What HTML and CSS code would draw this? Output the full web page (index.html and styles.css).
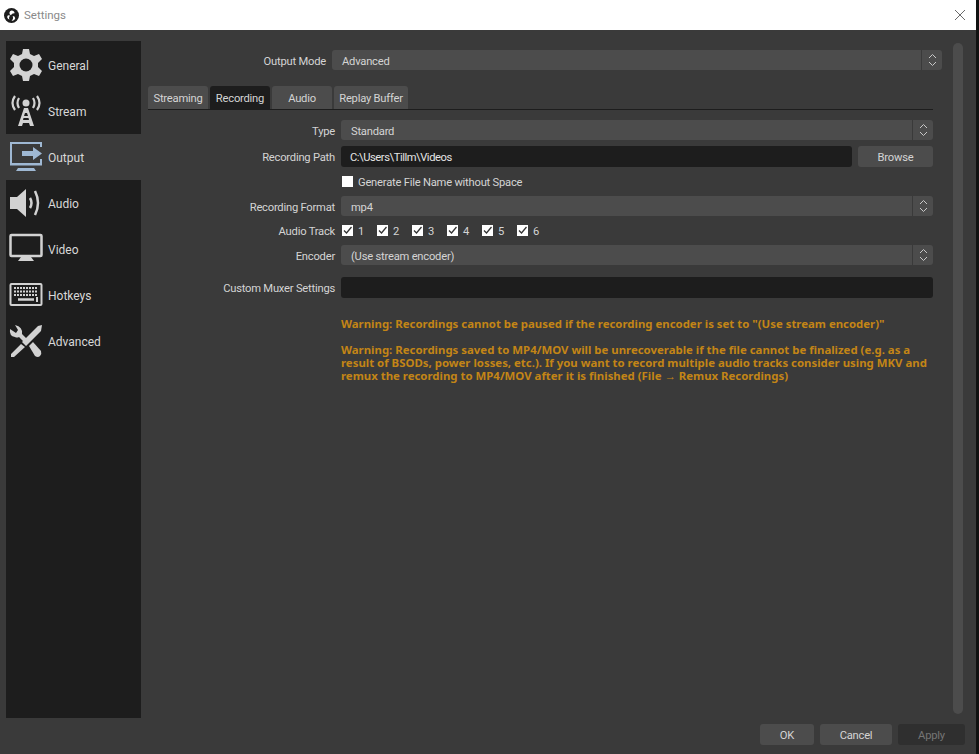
FILE: index.html
```html
<!DOCTYPE html>
<html lang="en">
<head>
  <meta charset="UTF-8">
  <title>Settings</title>
  <link rel="stylesheet" href="styles.css">
</head>
<body>
  <div class="titlebar">
    <svg class="app-logo" viewBox="0 0 24 24" width="15" height="15">
      <circle cx="12" cy="12" r="12" fill="#1d1d1d"/>
      <path d="M12 4a4 4 0 0 0-1 7.600 6 6 0 0 1 6-3.200A5 5 0 0 0 12 4zM6 12a4 4 0 0 0 3 6.500 6 6 0 0 1 .5-6.600A5 5 0 0 0 6 12zM12 20a5 5 0 0 0 6-3.500 4 4 0 0 0-4-3.500 6 6 0 0 1-2 7z" fill="#fff"/>
    </svg>
    <span class="title">Settings</span>
    <svg class="close" viewBox="0 0 12 12" width="12" height="12">
      <path d="M1 1l10 10M11 1L1 11" stroke="#6a6a6a" stroke-width="1" fill="none"/>
    </svg>
  </div>

  <div class="window">
    <div class="main">
      <ul class="sidebar">
        <li class="side-item">
          <svg viewBox="0 0 34 34" width="34" height="34">
            <path d="M14 1h6l1 5 4 2 5-2 3 5-4 4v4l4 4-3 5-5-2-4 2-1 5h-6l-1-5-4-2-5 2-3-5 4-4v-4L1 11l3-5 5 2 4-2z" fill="#d2d2d2"/>
            <circle cx="17" cy="17" r="6.500" fill="#1e1e1e"/>
          </svg>
          <span>General</span>
        </li>
        <li class="side-item">
          <svg viewBox="0 0 34 34" width="34" height="34">
            <circle cx="17" cy="9" r="3.500" fill="#d2d2d2"/>
            <path d="M10 4q-3 5 0 10M24 4q3 5 0 10M6 2q-5 7 0 14M28 2q5 7 0 14" stroke="#d2d2d2" stroke-width="2.200" fill="none"/>
            <path d="M15 14h4l6 18h-4l-1-3h-6l-1 3H9zM16 19l-1 3h4l-1-3zM14.500 24l-.5 2h6l-.5-2z" fill="#d2d2d2" fill-rule="evenodd"/>
          </svg>
          <span>Stream</span>
        </li>
        <li class="side-item active">
          <svg viewBox="0 0 34 34" width="34" height="34">
            <path d="M1 2h32v5h-2V4H3v19h28v-4h2v6.500H1z" fill="#9fb8d3"/>
            <path d="M9 28h16l2 3H7z" fill="#9fb8d3"/>
            <path d="M13 11h11V7l9 6.500-9 6.500v-4H13z" fill="#9fb8d3"/>
          </svg>
          <span>Output</span>
        </li>
        <li class="side-item">
          <svg viewBox="0 0 34 34" width="34" height="34">
            <path d="M1 11h7l9-8v28l-9-8H1z" fill="#d2d2d2"/>
            <path d="M21 12q3 5 0 10M26 5q6 12 0 24" stroke="#d2d2d2" stroke-width="2.500" fill="none"/>
          </svg>
          <span>Audio</span>
        </li>
        <li class="side-item">
          <svg viewBox="0 0 34 34" width="34" height="34">
            <rect x="1.500" y="3" width="31" height="21" rx="1" fill="none" stroke="#d2d2d2" stroke-width="2.500"/>
            <path d="M12 25h10l3 4H9z" fill="#d2d2d2"/>
          </svg>
          <span>Video</span>
        </li>
        <li class="side-item">
          <svg viewBox="0 0 34 34" width="34" height="34">
            <rect x="1.500" y="6" width="31" height="21" rx="1" fill="none" stroke="#d2d2d2" stroke-width="2"/>
            <path d="M5 10h24M5 13.500h24M5 17h24" stroke="#d2d2d2" stroke-width="2" stroke-dasharray="2 1" fill="none"/>
            <path d="M9 21.500h16" stroke="#d2d2d2" stroke-width="2.500" fill="none"/>
            <path d="M28 19v5" stroke="#d2d2d2" stroke-width="2" fill="none"/>
          </svg>
          <span>Hotkeys</span>
        </li>
        <li class="side-item">
          <svg viewBox="0 0 34 34" width="34" height="34">
            <path d="M1 5q-1 7 5 8 2 1 4 0l5 5 3-3-5-5q1-7-7-9l3 5-2 3z" fill="#d2d2d2"/>
            <path d="M33 1l-1 6-15 15-4-4L29 2zM16 23L5 33H2v-3l10-10z" fill="#d2d2d2"/>
            <path d="M20 22l4-4 8 9q1 3-1 5t-5 0z" fill="#d2d2d2"/>
          </svg>
          <span>Advanced</span>
        </li>
      </ul>

      <div class="content">
        <div class="mode-row">
          <label class="mode-label">Output Mode</label>
          <div class="select">
            <span class="select-text">Advanced</span>
            <span class="arrows"><svg viewBox="0 0 9 14" width="9" height="14"><path d="M1 5l3.500-3.500L8 5M1 9l3.500 3.500L8 9" stroke="#c8c8c8" fill="none"/></svg></span>
          </div>
        </div>

        <div class="tabs">
          <div class="tab">Streaming</div>
          <div class="tab selected">Recording</div>
          <div class="tab">Audio</div>
          <div class="tab wide">Replay Buffer</div>
        </div>

        <div class="form">
          <div class="row row-type">
            <label>Type</label>
            <div class="select">
              <span class="select-text">Standard</span>
              <span class="arrows"><svg viewBox="0 0 9 14" width="9" height="14"><path d="M1 5l3.500-3.500L8 5M1 9l3.500 3.500L8 9" stroke="#c8c8c8" fill="none"/></svg></span>
            </div>
          </div>
          <div class="row row-path">
            <label>Recording Path</label>
            <div class="input path">C:\Users\Tillm\Videos</div>
            <div class="btn browse">Browse</div>
          </div>
          <div class="row row-check">
            <label></label>
            <div class="check-item"><span class="box"></span>Generate File Name without Space</div>
          </div>
          <div class="row row-format">
            <label>Recording Format</label>
            <div class="select">
              <span class="select-text">mp4</span>
              <span class="arrows"><svg viewBox="0 0 9 14" width="9" height="14"><path d="M1 5l3.500-3.500L8 5M1 9l3.500 3.500L8 9" stroke="#c8c8c8" fill="none"/></svg></span>
            </div>
          </div>
          <div class="row row-tracks">
            <label>Audio Track</label>
            <div class="tracks">
              <div class="check-item"><span class="box"><svg viewBox="0 0 11 11" width="11" height="11"><path d="M2 5.500l2.500 2.500L9.500 2" stroke="#333" stroke-width="1.300" fill="none"/></svg></span>1</div>
              <div class="check-item"><span class="box"><svg viewBox="0 0 11 11" width="11" height="11"><path d="M2 5.500l2.500 2.500L9.500 2" stroke="#333" stroke-width="1.300" fill="none"/></svg></span>2</div>
              <div class="check-item"><span class="box"><svg viewBox="0 0 11 11" width="11" height="11"><path d="M2 5.500l2.500 2.500L9.500 2" stroke="#333" stroke-width="1.300" fill="none"/></svg></span>3</div>
              <div class="check-item"><span class="box"><svg viewBox="0 0 11 11" width="11" height="11"><path d="M2 5.500l2.500 2.500L9.500 2" stroke="#333" stroke-width="1.300" fill="none"/></svg></span>4</div>
              <div class="check-item"><span class="box"><svg viewBox="0 0 11 11" width="11" height="11"><path d="M2 5.500l2.500 2.500L9.500 2" stroke="#333" stroke-width="1.300" fill="none"/></svg></span>5</div>
              <div class="check-item"><span class="box"><svg viewBox="0 0 11 11" width="11" height="11"><path d="M2 5.500l2.500 2.500L9.500 2" stroke="#333" stroke-width="1.300" fill="none"/></svg></span>6</div>
            </div>
          </div>
          <div class="row row-encoder">
            <label>Encoder</label>
            <div class="select">
              <span class="select-text">(Use stream encoder)</span>
              <span class="arrows"><svg viewBox="0 0 9 14" width="9" height="14"><path d="M1 5l3.500-3.500L8 5M1 9l3.500 3.500L8 9" stroke="#c8c8c8" fill="none"/></svg></span>
            </div>
          </div>
          <div class="row row-muxer">
            <label>Custom Muxer Settings</label>
            <div class="input"></div>
          </div>
          <div class="warnings">
            <p>Warning: Recordings cannot be paused if the recording encoder is set to "(Use stream encoder)"</p>
            <p>Warning: Recordings saved to MP4/MOV will be unrecoverable if the file cannot be finalized (e.g. as a result of BSODs, power losses, etc.). If you want to record multiple audio tracks consider using MKV and remux the recording to MP4/MOV after it is finished (File → Remux Recordings)</p>
          </div>
        </div>
      </div>

      <div class="scrollbar"></div>
    </div>

    <div class="footer">
      <div class="btn ok">OK</div>
      <div class="btn cancel">Cancel</div>
      <div class="btn apply">Apply</div>
    </div>
  </div>
</body>
</html>
```

FILE: styles.css
```css
html {
  height: 100%;
  background-color: #111;
}
body {
  margin: 0;
  display: flex;
  flex-direction: column;
  width: 976px;
  height: 754px;
  font-family: Roboto, "Noto Sans", sans-serif;
  font-size: 11.2px;
  letter-spacing: -0.22px;
  color: #d4d4d4;
  background-color: #3a3a3a;
  overflow: hidden;
}

.titlebar {
  height: 30px;
  flex: none;
  display: flex;
  align-items: center;
  padding: 0 10px 0 4px;
  background-color: #fff;
}
.title {
  margin-left: 5px;
  color: #8a8a8a;
  font-size: 11.5px;
  letter-spacing: 0;
}
.close {
  margin-left: auto;
}

.window {
  flex: 1;
  display: flex;
  flex-direction: column;
  padding: 11px 0 9px 6px;
  min-height: 0;
}
.main {
  flex: 1;
  display: flex;
  min-height: 0;
}

.sidebar {
  width: 135px;
  height: 676px;
  flex: none;
  margin: 0;
  padding: 1px 0 0;
  list-style: none;
  background-color: #1d1d1d;
}
.side-item {
  height: 46px;
  display: flex;
  align-items: center;
  gap: 5px;
  padding-left: 3px;
  font-size: 12px;
  letter-spacing: 0;
  color: #d8d8d8;
}
.side-item span {
  padding-top: 2px;
}
.side-item.active {
  background-color: #3a3a3a;
}

.content {
  width: 785px;
  flex: none;
  margin-left: 7px;
  padding-top: 9px;
}

.mode-row {
  display: flex;
  align-items: center;
  height: 20px;
  width: 794px;
}
.mode-label {
  width: 178px;
  padding: 2px 6px 0 0;
  text-align: right;
}
.mode-row .select {
  width: 610px;
}

.select {
  display: flex;
  align-items: center;
  height: 20px;
  flex: 1;
  border-radius: 3px;
  background-color: #4c4c4c;
}
.select-text {
  flex: 1;
  padding: 2px 0 0 10px;
}
.arrows {
  width: 20px;
  height: 20px;
  display: flex;
  align-items: center;
  justify-content: center;
  border-left: 1px solid #3a3a3a;
}

.tabs {
  display: flex;
  gap: 2px;
  height: 24px;
  margin-top: 16px;
  border-bottom: 1px solid #1d1d1d;
  box-sizing: border-box;
}
.tab {
  width: 60px;
  height: 23px;
  box-sizing: border-box;
  padding-top: 2px;
  display: flex;
  align-items: center;
  justify-content: center;
  border-radius: 3px 3px 0 0;
  background-color: #4c4c4c;
}
.tab.selected {
  background-color: #1d1d1d;
}
.tab.wide {
  width: 74px;
}

.form {
  padding-top: 10px;
}
.row {
  display: flex;
  align-items: center;
  gap: 6px;
}
.row label {
  width: 187px;
  flex: none;
  padding-top: 2px;
  text-align: right;
}
.row-type {
  height: 20px;
}
.row-path {
  height: 21px;
  margin-top: 6px;
}
.row-check {
  height: 11px;
  margin-top: 9px;
}
.row-format {
  height: 20px;
  margin-top: 9px;
}
.row-tracks {
  height: 11px;
  margin-top: 9px;
}
.row-encoder {
  height: 20px;
  margin-top: 9px;
}
.row-muxer {
  height: 21px;
  margin-top: 12px;
}

.input {
  flex: 1;
  height: 21px;
  line-height: 23px;
  padding-left: 9px;
  border-radius: 3px;
  background-color: #1d1d1d;
  color: #e4e4e4;
}
.path {
  letter-spacing: -0.45px;
}
.btn {
  height: 21px;
  box-sizing: border-box;
  padding-top: 2px;
  display: flex;
  align-items: center;
  justify-content: center;
  border-radius: 3px;
  background-color: #4c4c4c;
}
.browse {
  width: 75px;
  flex: none;
}

.check-item {
  display: flex;
  align-items: center;
  gap: 5px;
  margin: 2px 0 0 1px;
}
.box {
  width: 11px;
  height: 11px;
  flex: none;
  margin-bottom: 2px;
  background-color: #fff;
}
.box svg {
  display: block;
}
.tracks {
  display: flex;
}
.tracks .check-item {
  width: 34px;
}

.warnings {
  margin: 19px 0 0 193px;
  width: 592px;
  font-family: "Noto Sans", sans-serif;
  font-size: 11.4px;
  font-weight: bold;
  letter-spacing: 0;
  line-height: 13px;
  color: #c38516;
}
.warnings p {
  margin: 0 0 13px;
}

.scrollbar {
  width: 10px;
  height: 671px;
  flex: none;
  margin: 2px 0 0 20px;
  border-radius: 5px;
  background-color: #4c4c4c;
}

.footer {
  flex: none;
  height: 21px;
  display: flex;
  justify-content: flex-end;
  gap: 6px;
  padding: 6px 11px 0 0;
}
.ok {
  width: 54px;
}
.cancel {
  width: 72px;
}
.apply {
  width: 67px;
  background-color: #2f2f2f;
  color: #757575;
}
```
